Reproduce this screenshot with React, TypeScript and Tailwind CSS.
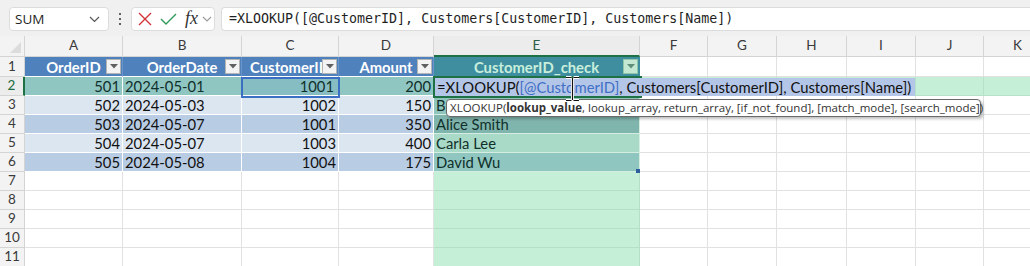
import React from 'react';

const LETTERS = ['A', 'B', 'C', 'D', 'E', 'F', 'G', 'H', 'I', 'J', 'K'];

type Row = string[];
const DATA: Row[] = [
  ['OrderID', 'OrderDate', 'CustomerID', 'Amount', 'CustomerID_check'],
  ['501', '2024-05-01', '1001', '200', ''],
  ['502', '2024-05-03', '1002', '150', 'B'],
  ['503', '2024-05-07', '1001', '350', 'Alice Smith'],
  ['504', '2024-05-07', '1003', '400', 'Carla Lee'],
  ['505', '2024-05-08', '1004', '175', 'David Wu'],
];

function FilterBtn({ active }: { active?: boolean }) {
  return (
    <span
      className={
        active
          ? 'absolute right-[1px] top-[2px] w-[15px] h-[15px] bg-[#c4e8d2] border border-[#8fc7a8] flex items-center justify-center'
          : 'absolute right-[1px] top-[2px] w-[15px] h-[15px] bg-[#f3f3f3] border border-[#b4b4b4] flex items-center justify-center'
      }
    >
      <svg width="8" height="5" viewBox="0 0 8 5">
        <path d="M0 0 L8 0 L4 4.5 Z" fill={active ? '#5f8f78' : '#606060'} />
      </svg>
    </span>
  );
}

function cellClass(r: number, c: number): string {
  const base = 'relative overflow-hidden whitespace-nowrap flex items-end pb-[1px] border-r border-b ';
  if (r === 1) {
    if (c <= 3) return base + 'bg-[#4f81bd] border-r-[#6b95c9] border-b-[#ffffff] justify-center font-bold text-white';
    if (c === 4) return base + 'bg-[#3e8e9f] border-r-[#3e8e9f] border-b-[#1e7145] justify-center font-bold text-[#c9efdc]';
    return base + 'bg-white border-[#e1e1e1]';
  }
  if (r === 2) {
    if (c === 2) return base + 'bg-[#86bdc3] border-white justify-end pr-[4px] text-[#10302b]';
    if (c <= 3) return base + 'bg-[#8fc6c2] border-white ' + (c === 1 ? 'justify-start pl-[2px] ' : 'justify-end pr-[2px] ') + 'text-[#10302b]';
    if (c === 4) return base + 'bg-[#b4c6e7] border-[#b4c6e7]';
    return base + 'bg-[#c6efd7] border-[#b7e2c9]';
  }
  if (r <= 6) {
    const dark = r % 2 === 0;
    if (c <= 3) {
      return (
        base +
        (dark ? 'bg-[#b8cce4] ' : 'bg-[#dce6f1] ') +
        'border-white ' +
        (c === 1 ? 'justify-start pl-[2px] ' : 'justify-end pr-[2px] ') +
        'text-[#111]'
      );
    }
    if (c === 4) {
      const bg =
        r === 3 ? 'bg-[#90c5bd] ' : r === 4 ? 'bg-[#80b5ad] ' : r === 5 ? 'bg-[#a9d9c7] ' : 'bg-[#8fc6c0] ';
      return base + bg + 'border-[#d3ede0] justify-start pl-[2px] text-[#10302b]';
    }
    return base + 'bg-white border-[#e1e1e1]';
  }
  if (c === 4) return base + 'bg-[#c6efd7] border-[#b5e0c8]';
  return base + 'bg-white border-[#e1e1e1]';
}

export default function App() {
  const rows = Array.from({ length: 11 }, (_, i) => i + 1);
  return (
    <div className="relative w-[1030px] h-[266px] overflow-hidden bg-white font-['Lato',sans-serif]">
      {/* Toolbar */}
      <div className="h-[36px] bg-[#f0f0f0] flex items-center pl-[9px] pt-[2px] gap-0">
        <div className="w-[100px] h-[24px] bg-white border border-[#dcdcdc] rounded-[4px] flex items-center justify-between pl-[5px] pr-[8px]">
          <span className="font-['Open_Sans',sans-serif] text-[13.5px] text-[#1f1f1f]">SUM</span>
          <svg width="11" height="7" viewBox="0 0 11 7">
            <path d="M1 1 L5.5 5.5 L10 1" fill="none" stroke="#555" strokeWidth="1.2" />
          </svg>
        </div>
        <div className="w-[22px] flex flex-col items-center justify-center gap-[2.5px]">
          <span className="w-[2.5px] h-[2.5px] rounded-full bg-[#333]" />
          <span className="w-[2.5px] h-[2.5px] rounded-full bg-[#333]" />
          <span className="w-[2.5px] h-[2.5px] rounded-full bg-[#333]" />
        </div>
        <div className="w-[84px] h-[24px] bg-white border border-[#dcdcdc] rounded-[4px] flex items-center pl-[6px]">
          <svg width="14" height="14" viewBox="0 0 14 14">
            <path d="M1 1 L13 13 M13 1 L1 13" stroke="#d13438" strokeWidth="1.4" fill="none" />
          </svg>
          <svg width="17" height="12" viewBox="0 0 17 12" className="ml-[8px]">
            <path d="M1 6 L6 11 L16 1" stroke="#2f9a57" strokeWidth="1.4" fill="none" />
          </svg>
          <span className="ml-[8px] font-['Liberation_Serif',serif] italic text-[18px] leading-none text-[#333] -mt-[2px]">fx</span>
          <svg width="10" height="6" viewBox="0 0 10 6" className="ml-[4px]">
            <path d="M1 1 L5 5 L9 1" fill="none" stroke="#9a9a9a" strokeWidth="1.1" />
          </svg>
        </div>
        <div className="ml-[6px] flex-1 h-[24px] bg-white border border-[#dcdcdc] rounded-l-[4px] border-r-0 flex items-center pl-[7px]">
          <span className="font-['DejaVu_Sans_Mono',monospace] text-[13.3px] text-[#1f1f1f]">
            =XLOOKUP([@CustomerID], Customers[CustomerID], Customers[Name])
          </span>
        </div>
      </div>

      {/* Sheet grid */}
      <div className="grid grid-cols-[25px_98px_119px_97px_95px_206px_68px_69px_70px_69px_68px_68px] grid-rows-[21px_20px_repeat(10,19px)] text-[14.8px] leading-none">
        <div className="relative bg-[#f3f3f3] border-r border-b border-[#d4d4d4]">
          <svg width="11" height="11" viewBox="0 0 11 11" className="absolute right-[3px] bottom-[3px]">
            <path d="M11 0 L11 11 L0 11 Z" fill="#dcdcdc" />
          </svg>
        </div>
        {LETTERS.map((l) => (
          <div
            key={l}
            className={
              l === 'E'
                ? 'bg-[#ececec] border-r border-[#d4d4d4] border-b-2 border-b-[#1e7145] flex items-center justify-center text-[13.5px] text-[#2d5f45]'
                : 'bg-[#f3f3f3] border-r border-b border-[#d4d4d4] flex items-center justify-center text-[13.5px] text-[#3a3a3a]'
            }
          >
            {l}
          </div>
        ))}
        {rows.map((r) => (
          <React.Fragment key={r}>
            <div
              className={
                r === 2
                  ? 'bg-[#ececec] border-b border-[#d4d4d4] border-r-2 border-r-[#1e7145] flex items-center justify-center text-[13.5px] text-[#1e6b41]'
                  : 'bg-[#f3f3f3] border-r border-b border-[#d4d4d4] flex items-center justify-center text-[13.5px] text-[#3a3a3a]'
              }
            >
              {r}
            </div>
            {LETTERS.map((_, c) => {
              const txt = r <= 6 && c <= 4 && !(r === 2 && c === 4) ? DATA[r - 1][c] : '';
              return (
                <div key={c} className={cellClass(r, c)}>
                  {txt}
                  {r === 1 && c <= 4 && <FilterBtn active={c === 4} />}
                </div>
              );
            })}
          </React.Fragment>
        ))}
      </div>

      {/* C2 reference highlight */}
      <div className="absolute left-[241px] top-[77px] w-[99px] h-[21px] border-2 border-[#3a6fc4] pointer-events-none" />

      {/* Active cell border (E2) */}
      <div className="absolute left-[433px] top-[76px] w-[209px] h-[22px] border-2 border-[#1e7145]" />

      {/* In-cell edit overflow */}
      <div className="absolute left-[435px] top-[78px] w-[480px] h-[18px] bg-[#b4c6e7] flex items-end pb-[1px] pl-[2px] whitespace-nowrap text-[14.8px] leading-none text-[#111]">
        <span>=XLOOKUP(</span>
        <span className="text-[#3f6fc6]">[@CustomerID]</span>
        <span>, Customers[CustomerID], Customers[Name])</span>
      </div>

      {/* Function tooltip */}
      <div className="absolute left-[446px] top-[99px] w-[535px] h-[18px] bg-white border border-[#6a6a6a] rounded-[4px] shadow-[2px_2px_3px_rgba(0,0,0,0.25)] flex items-center pl-[3px] whitespace-nowrap font-['Open_Sans',sans-serif] text-[11.5px] text-[#333]">
        <span>XLOOKUP(</span>
        <span className="font-bold">lookup_value</span>
        <span>, lookup_array, return_array, [if_not_found], [match_mode], [search_mode])</span>
      </div>

      {/* Table resize handle */}
      <div className="absolute left-[636px] top-[169px] w-[4px] h-[4px] bg-[#2f5e9e]" />

      {/* I-beam cursor */}
      <svg width="15" height="26" viewBox="0 0 15 26" className="absolute left-[565px] top-[76px]">
        <path d="M1 1.5 H6.5 M8.5 1.5 H14 M7.5 2 V24 M1 24.5 H6.5 M8.5 24.5 H14" stroke="#fff" strokeWidth="3" fill="none" />
        <path d="M1 1.5 H6.5 M8.5 1.5 H14 M7.5 2 V24 M1 24.5 H6.5 M8.5 24.5 H14" stroke="#111" strokeWidth="1.2" fill="none" />
      </svg>
    </div>
  );
}
